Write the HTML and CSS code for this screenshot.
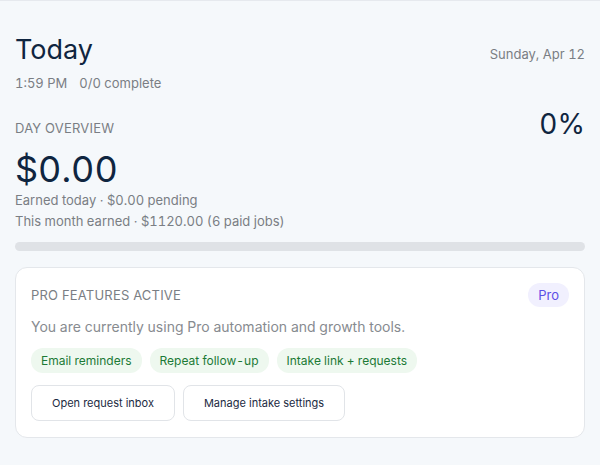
FILE: index.html
```html
<!doctype html>
<html lang="en">
  <head>
    <meta charset="UTF-8" />
    <title>Today</title>
    <link rel="stylesheet" href="styles.css">
  </head>
  <body>
    <div class="page">
      <header class="head">
        <div>
          <h1>Today</h1>
          <div class="sub">
            <span>1:59 PM</span>
            <span>0/0 complete</span>
          </div>
        </div>
        <div class="date">Sunday, Apr 12</div>
      </header>

      <section class="overview">
        <div class="ov-top">
          <div>
            <div class="label">Day overview</div>
            <div class="amount">$0.00</div>
          </div>
          <div class="pct">0%</div>
        </div>
        <div class="meta">Earned today · $0.00 pending</div>
        <div class="meta">This month earned · $1120.00 (6 paid jobs)</div>
        <div class="bar"><div class="bar-fill" style="width: 0%"></div></div>
      </section>

      <section class="card">
        <div class="card-head">
          <div class="label">Pro features active</div>
          <span class="badge">Pro</span>
        </div>
        <p class="card-text">You are currently using Pro automation and growth tools.</p>
        <div class="chips">
          <span class="chip">Email reminders</span>
          <span class="chip">Repeat follow-up</span>
          <span class="chip">Intake link + requests</span>
        </div>
        <div class="actions">
          <button>Open request inbox</button>
          <button>Manage intake settings</button>
        </div>
      </section>
    </div>
  </body>
</html>
```

FILE: styles.css
```css
body {
  margin: 0;
  font-family: Inter, "Noto Sans", sans-serif;
  font-variant-numeric: tabular-nums;
  background: #f5f8fb;
  color: #0f2540;
}
.page {
  border-top: 1px solid #e6e9ee;
  padding: 30px 15px 28px;
}
.head {
  display: flex;
  justify-content: space-between;
  align-items: flex-start;
}
h1 {
  margin: 0;
  font-size: 27px;
  font-weight: 400;
  line-height: 38px;
  color: #0f2540;
}
.sub {
  display: flex;
  gap: 12px;
  margin-top: 6px;
  font-size: 13px;
  color: #7a7e84;
}
.date {
  margin-top: 15px;
  font-size: 13px;
  color: #7a7e84;
}
.overview {
  margin-top: 29px;
}
.ov-top {
  display: flex;
  justify-content: space-between;
  align-items: flex-start;
}
.label {
  font-size: 13px;
  text-transform: uppercase;
  color: #7a7e84;
  letter-spacing: 0.2px;
}
.pct {
  font-size: 28px;
  line-height: 34px;
  margin-top: -13px;
}
.amount {
  font-size: 36px;
  line-height: 42px;
  margin-top: 12px;
}
.meta {
  font-size: 13px;
  line-height: 21px;
  color: #7a7e84;
}
.bar {
  margin-top: 10px;
  height: 9px;
  border-radius: 5px;
  background: #dfe2e6;
  overflow: hidden;
}
.bar-fill {
  height: 100%;
  background: #3b82f6;
}
.card {
  margin-top: 16px;
  background: white;
  border: 1px solid #e4e7eb;
  border-radius: 12px;
  padding: 15px 15px 16px;
}
.card-head {
  display: flex;
  justify-content: space-between;
  align-items: center;
}
.badge {
  background: #f1f0fe;
  color: #5b4fe6;
  font-size: 13px;
  padding: 4px 10px;
  border-radius: 12px;
}
.card-text {
  margin: 11px 0 0;
  font-size: 14px;
  color: #878b90;
}
.chips {
  display: flex;
  gap: 8px;
  margin-top: 13px;
}
.chip {
  background: #eef8ef;
  color: #1c7a36;
  font-size: 12px;
  padding: 5px 10px;
  border-radius: 12px;
}
.actions {
  display: flex;
  gap: 8px;
  margin-top: 12px;
}
button {
  font-family: inherit;
  font-size: 11px;
  color: #1b2a42;
  background: white;
  border: 1px solid #e1e4e8;
  border-radius: 8px;
  padding: 0 20px;
  height: 36px;
}
```
